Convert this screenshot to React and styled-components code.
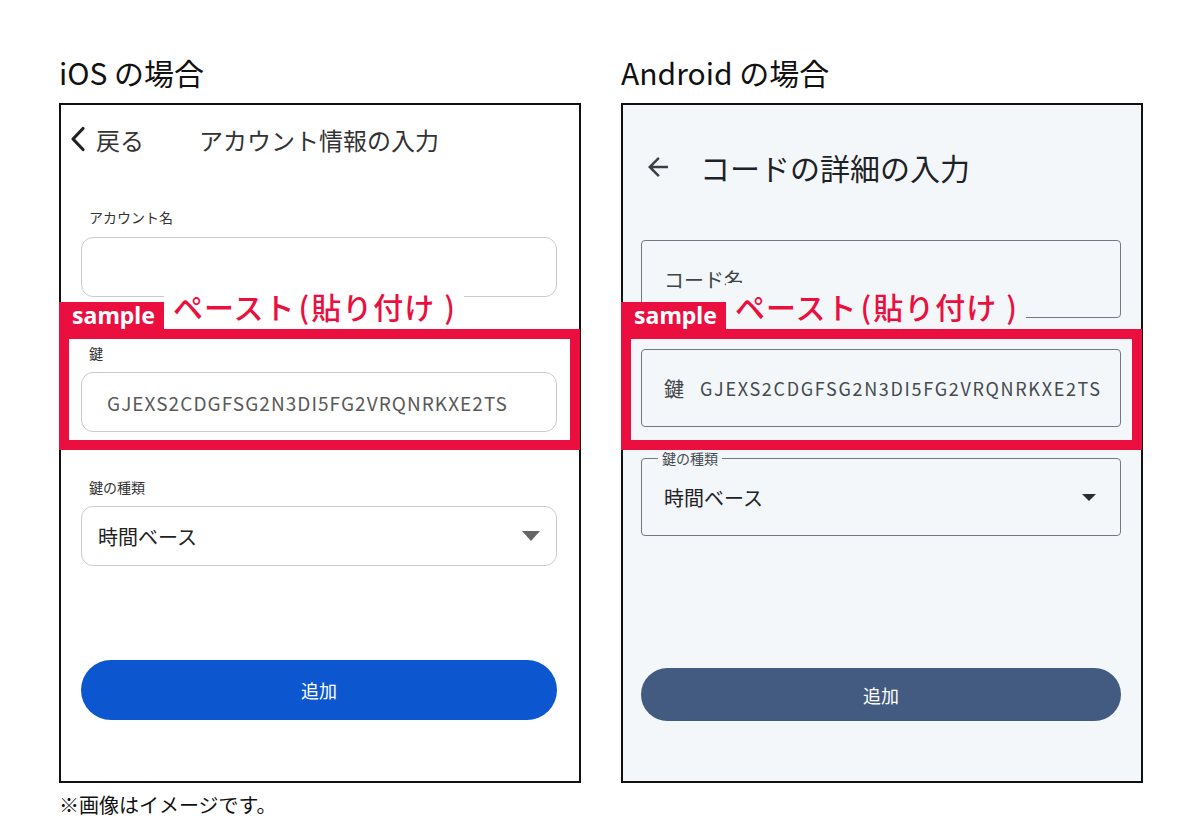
import React from 'react';
import styled, { createGlobalStyle } from 'styled-components';

const RED = '#eb0f3f';
const CODE = 'GJEXS2CDGFSG2N3DI5FG2VRQNRKXE2TS';

const GlobalStyle = createGlobalStyle`
  body {
    margin: 0;
    background: #fff;
    font-family: "Noto Sans CJK JP", "Noto Sans", sans-serif;
    color: #111;
  }
`;

const Page = styled.div`
  display: flex;
  gap: 40px;
  padding: 52px 0 0 59px;
`;

const Column = styled.div`
  width: 522px;
  display: flex;
  flex-direction: column;
`;

const Title = styled.h2`
  margin: 0 0 11px;
  font-size: 30px;
  font-weight: 400;
  line-height: 40px;
  color: #111;
`;

const Panel = styled.div`
  position: relative;
  height: 680px;
  box-sizing: border-box;
  border: 2px solid #111;
  background: ${(p) => p.$bg};
  display: flex;
  flex-direction: column;
`;

const Note = styled.p`
  margin: 9px 0 0;
  font-size: 20px;
  line-height: 26px;
  color: #111;
`;

/* ---------- iOS ---------- */

const IosHeader = styled.div`
  height: 68px;
  display: flex;
  align-items: center;
  padding-left: 9px;
  font-size: 24px;
  color: #333;
`;

const BackLabel = styled.span`
  margin-left: 10px;
`;

const IosTitle = styled.span`
  margin-left: 55px;
`;

const Form = styled.div`
  display: flex;
  flex-direction: column;
  padding: ${(p) => p.$pad};
`;

const IosLabel = styled.div`
  margin: ${(p) => p.$top}px 0 0 8px;
  font-size: 14px;
  line-height: 20px;
  color: #333;
`;

const IosField = styled.div`
  margin-top: ${(p) => p.$top}px;
  height: 60px;
  box-sizing: border-box;
  border: 1px solid #c9cbcc;
  border-radius: 12px;
  display: flex;
  align-items: center;
  justify-content: space-between;
  padding: ${(p) => (p.$select ? '0 16px 0 16px' : '0 0 0 25px')};
  background: #fff;
`;

const IosCode = styled.span`
  font-size: 19px;
  letter-spacing: 1.05px;
  color: #5a5a5a;
`;

const IosValue = styled.span`
  font-size: 20px;
  color: #222;
`;

const DownTriangle = styled.span`
  width: 0;
  height: 0;
  border-left: ${(p) => p.$w / 2}px solid transparent;
  border-right: ${(p) => p.$w / 2}px solid transparent;
  border-top: ${(p) => p.$h}px solid ${(p) => p.$color};
`;

const PillButton = styled.button`
  margin-top: ${(p) => p.$top}px;
  height: ${(p) => p.$h}px;
  border: none;
  border-radius: 999px;
  background: ${(p) => p.$bg};
  color: #fff;
  font-family: inherit;
  font-size: 18px;
`;

/* ---------- Android ---------- */

const DroidHeader = styled.div`
  height: 124px;
  display: flex;
  align-items: center;
  padding-left: 20px;
  font-size: 30px;
  color: #1e2226;
`;

const DroidTitle = styled.span`
  margin-left: 27px;
`;

const DroidField = styled.div`
  position: relative;
  margin-top: ${(p) => p.$top}px;
  height: 78px;
  box-sizing: border-box;
  border: 1px solid #6f7a84;
  border-radius: 4px;
  display: flex;
  align-items: center;
  justify-content: space-between;
  padding: 0 24px 0 22px;
  font-size: 20px;
  color: #3f4448;
`;

const DroidKey = styled.span`
  display: flex;
  align-items: center;
  gap: 16px;
`;

const DroidCode = styled.span`
  font-size: 18px;
  letter-spacing: 1.68px;
  color: #444a4f;
`;

const DroidValue = styled.span`
  color: #1e2226;
`;

const Notch = styled.span`
  position: absolute;
  top: -11px;
  left: 16px;
  padding: 0 4px;
  font-size: 14px;
  line-height: 20px;
  color: #454b50;
  background: #f3f7fa;
`;

/* ---------- annotation ---------- */

const Annotation = styled.div`
  position: absolute;
  top: 178px;
  left: -2px;
  right: -1px;
  display: flex;
  flex-direction: column;
`;

const AnnoTop = styled.div`
  display: flex;
  align-items: flex-end;
  height: 46px;
`;

const Tag = styled.span`
  width: 109px;
  height: 27px;
  background: ${RED};
  color: #fff;
  font-family: "Noto Sans", "Noto Sans CJK JP", sans-serif;
  font-weight: 700;
  font-size: 23px;
  line-height: 27px;
  text-align: center;
`;

const Caption = styled.span`
  height: 46px;
  margin-left: -4px;
  padding: 0 8px 0 9px;
  background: ${(p) => p.$bg};
  color: ${RED};
  font-size: 30px;
  font-weight: 500;
  letter-spacing: 1px;
  line-height: 46px;
`;

const Paren = styled.span`
  margin: 0 ${(p) => p.$right}px 0 ${(p) => p.$left}px;
`;

const Frame = styled.div`
  height: 121px;
  box-sizing: border-box;
  border: 10px solid ${RED};
`;

const Mark = ({ bg }) => (
  <Annotation>
    <AnnoTop>
      <Tag>sample</Tag>
      <Caption $bg={bg}>
        ペースト<Paren $left={3} $right={1}>(</Paren>貼り付け<Paren $left={9} $right={0}>)</Paren>
      </Caption>
    </AnnoTop>
    <Frame />
  </Annotation>
);

const Chevron = () => (
  <svg width="16" height="26" viewBox="0 0 16 26">
    <polyline points="13,2.5 3,13 13,23.5" fill="none" stroke="#222" strokeWidth="3.2" strokeLinecap="round" strokeLinejoin="round" />
  </svg>
);

const ArrowBack = () => (
  <svg width="30" height="30" viewBox="0 0 24 24">
    <path d="M20 11H7.83l5.59-5.59L12 4l-8 8 8 8 1.41-1.41L7.83 13H20v-2z" fill="#3a3f44" />
  </svg>
);

const App = () => {
  return (
    <>
      <GlobalStyle />
      <Page>
        <Column>
          <Title>iOS の場合</Title>
          <Panel $bg="#fff">
            <IosHeader>
              <Chevron />
              <BackLabel>戻る</BackLabel>
              <IosTitle>アカウント情報の入力</IosTitle>
            </IosHeader>
            <Form $pad="0 22px 0 20px">
              <IosLabel $top={34}>アカウント名</IosLabel>
              <IosField $top={10} />
              <IosLabel $top={46}>鍵</IosLabel>
              <IosField $top={9}>
                <IosCode>{CODE}</IosCode>
              </IosField>
              <IosLabel $top={45}>鍵の種類</IosLabel>
              <IosField $top={9} $select>
                <IosValue>時間ベース</IosValue>
                <DownTriangle $w={18} $h={10} $color="#666" />
              </IosField>
              <PillButton $top={94} $h={60} $bg="#0c57cf">追加</PillButton>
            </Form>
            <Mark bg="#fff" />
          </Panel>
          <Note>※画像はイメージです。</Note>
        </Column>

        <Column>
          <Title>Android の場合</Title>
          <Panel $bg="#f3f7fa">
            <DroidHeader>
              <ArrowBack />
              <DroidTitle>コードの詳細の入力</DroidTitle>
            </DroidHeader>
            <Form $pad="0 20px 0 18px">
              <DroidField $top={11}>コード名</DroidField>
              <DroidField $top={31}>
                <DroidKey>
                  鍵<DroidCode>{CODE}</DroidCode>
                </DroidKey>
              </DroidField>
              <DroidField $top={31}>
                <Notch>鍵の種類</Notch>
                <DroidValue>時間ベース</DroidValue>
                <DownTriangle $w={14} $h={7} $color="#2a2e32" />
              </DroidField>
              <PillButton $top={132} $h={53} $bg="#435b81">追加</PillButton>
            </Form>
            <Mark bg="#f3f7fa" />
          </Panel>
        </Column>
      </Page>
    </>
  );
};

export default App;
